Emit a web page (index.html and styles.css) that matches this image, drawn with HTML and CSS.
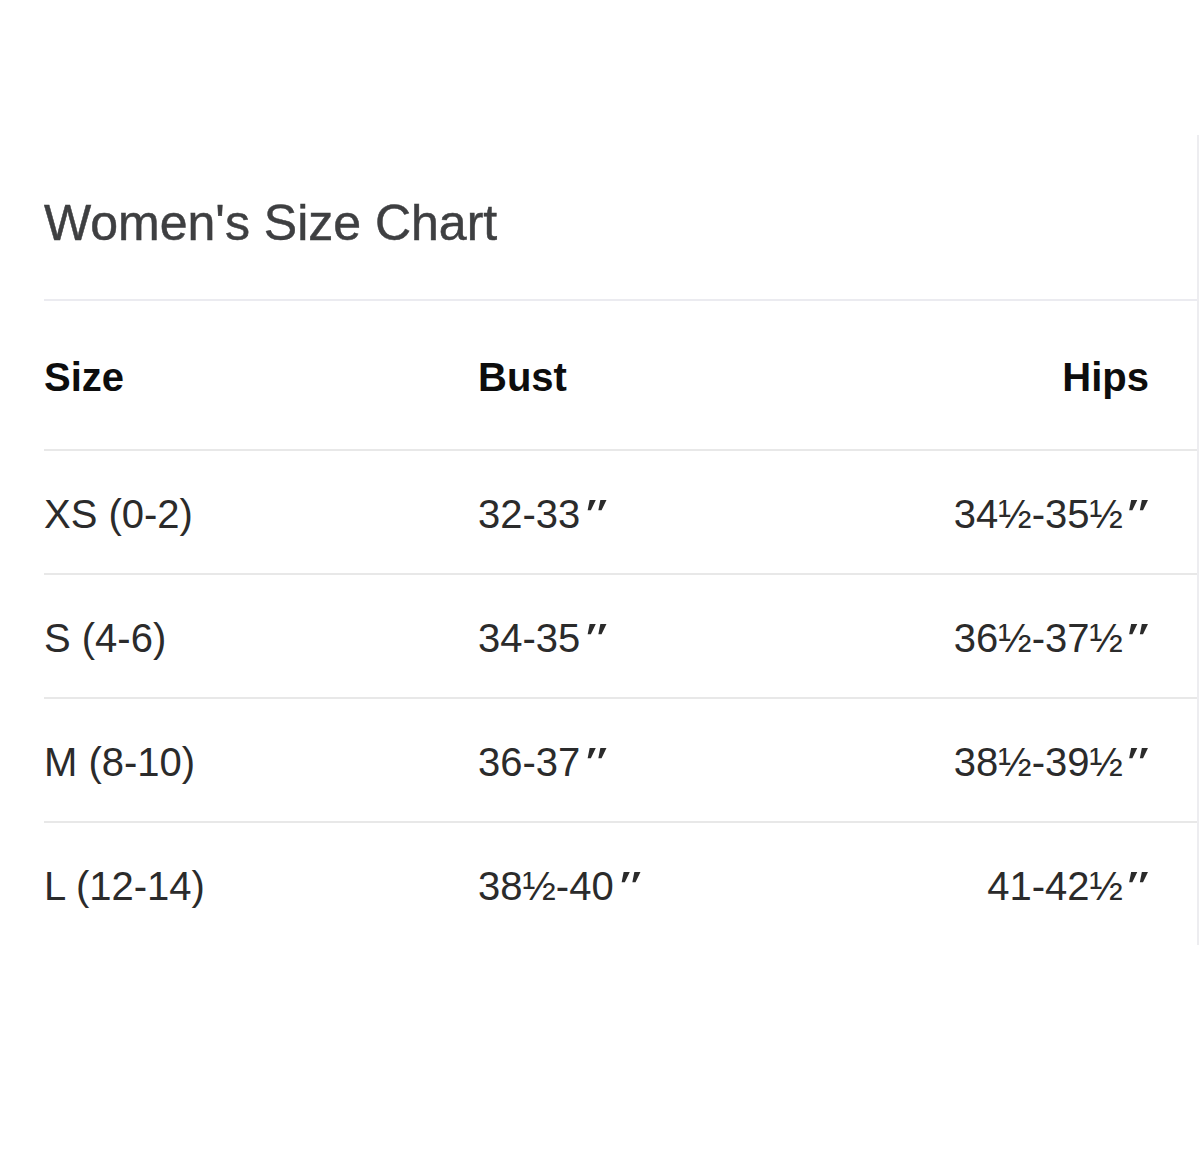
FILE: index.html
```html
<!DOCTYPE html>
<html lang="en">
<head>
<meta charset="utf-8">
<title>Women's Size Chart</title>
<link rel="stylesheet" href="styles.css">
</head>
<body>
<div class="panel">
  <h1 class="title">Women's Size Chart</h1>
  <div class="chart">
    <div class="row head">
      <div class="c1">Size</div>
      <div class="c2">Bust</div>
      <div class="c3">Hips</div>
    </div>
    <div class="row">
      <div class="c1">XS (0-2)</div>
      <div class="c2">32-33<span class="in">″</span></div>
      <div class="c3">34½-35½<span class="in">″</span></div>
    </div>
    <div class="row">
      <div class="c1">S (4-6)</div>
      <div class="c2">34-35<span class="in">″</span></div>
      <div class="c3">36½-37½<span class="in">″</span></div>
    </div>
    <div class="row">
      <div class="c1">M (8-10)</div>
      <div class="c2">36-37<span class="in">″</span></div>
      <div class="c3">38½-39½<span class="in">″</span></div>
    </div>
    <div class="row last">
      <div class="c1">L (12-14)</div>
      <div class="c2">38½-40<span class="in">″</span></div>
      <div class="c3">41-42½<span class="in">″</span></div>
    </div>
  </div>
</div>
</body>
</html>
```

FILE: styles.css
```css
html, body {
  margin: 0;
  padding: 0;
  background: #ffffff;
}
body {
  font-family: "Liberation Sans", Arial, "DejaVu Sans", sans-serif;
  width: 1200px;
  height: 1161px;
  overflow: hidden;
}
.panel {
  margin: 135px 0 0 44px;
  width: 1153px;
  border-right: 2px solid #ededf0;
}
.title {
  margin: 0;
  padding-top: 58px;
  padding-bottom: 46px;
  font-size: 50px;
  line-height: 60px;
  font-weight: normal;
  color: #3e3f41;
  -webkit-text-stroke: 0.5px #3e3f41;
}
.chart {
  border-top: 2px solid #ebebf0;
}
.row {
  display: grid;
  grid-template-columns: 434px 1fr 300px;
  padding: 39px 48px 35px 0;
  font-size: 40px;
  line-height: 48px;
  color: #2b2b2b;
  border-bottom: 2px solid #e8e8e8;
}
.row.head {
  padding: 52px 48px 48px 0;
  font-weight: bold;
  color: #0d0d0d;
}
.row.last {
  border-bottom: none;
}
.c3 {
  text-align: right;
}
.in {
  display: inline-block;
  margin-left: 5px;
  transform: scaleX(1.6);
  transform-origin: left center;
  margin-right: 7px;
}
.c3 .in {
  margin-right: 0;
  margin-left: 12px;
  transform-origin: right center;
}
```
